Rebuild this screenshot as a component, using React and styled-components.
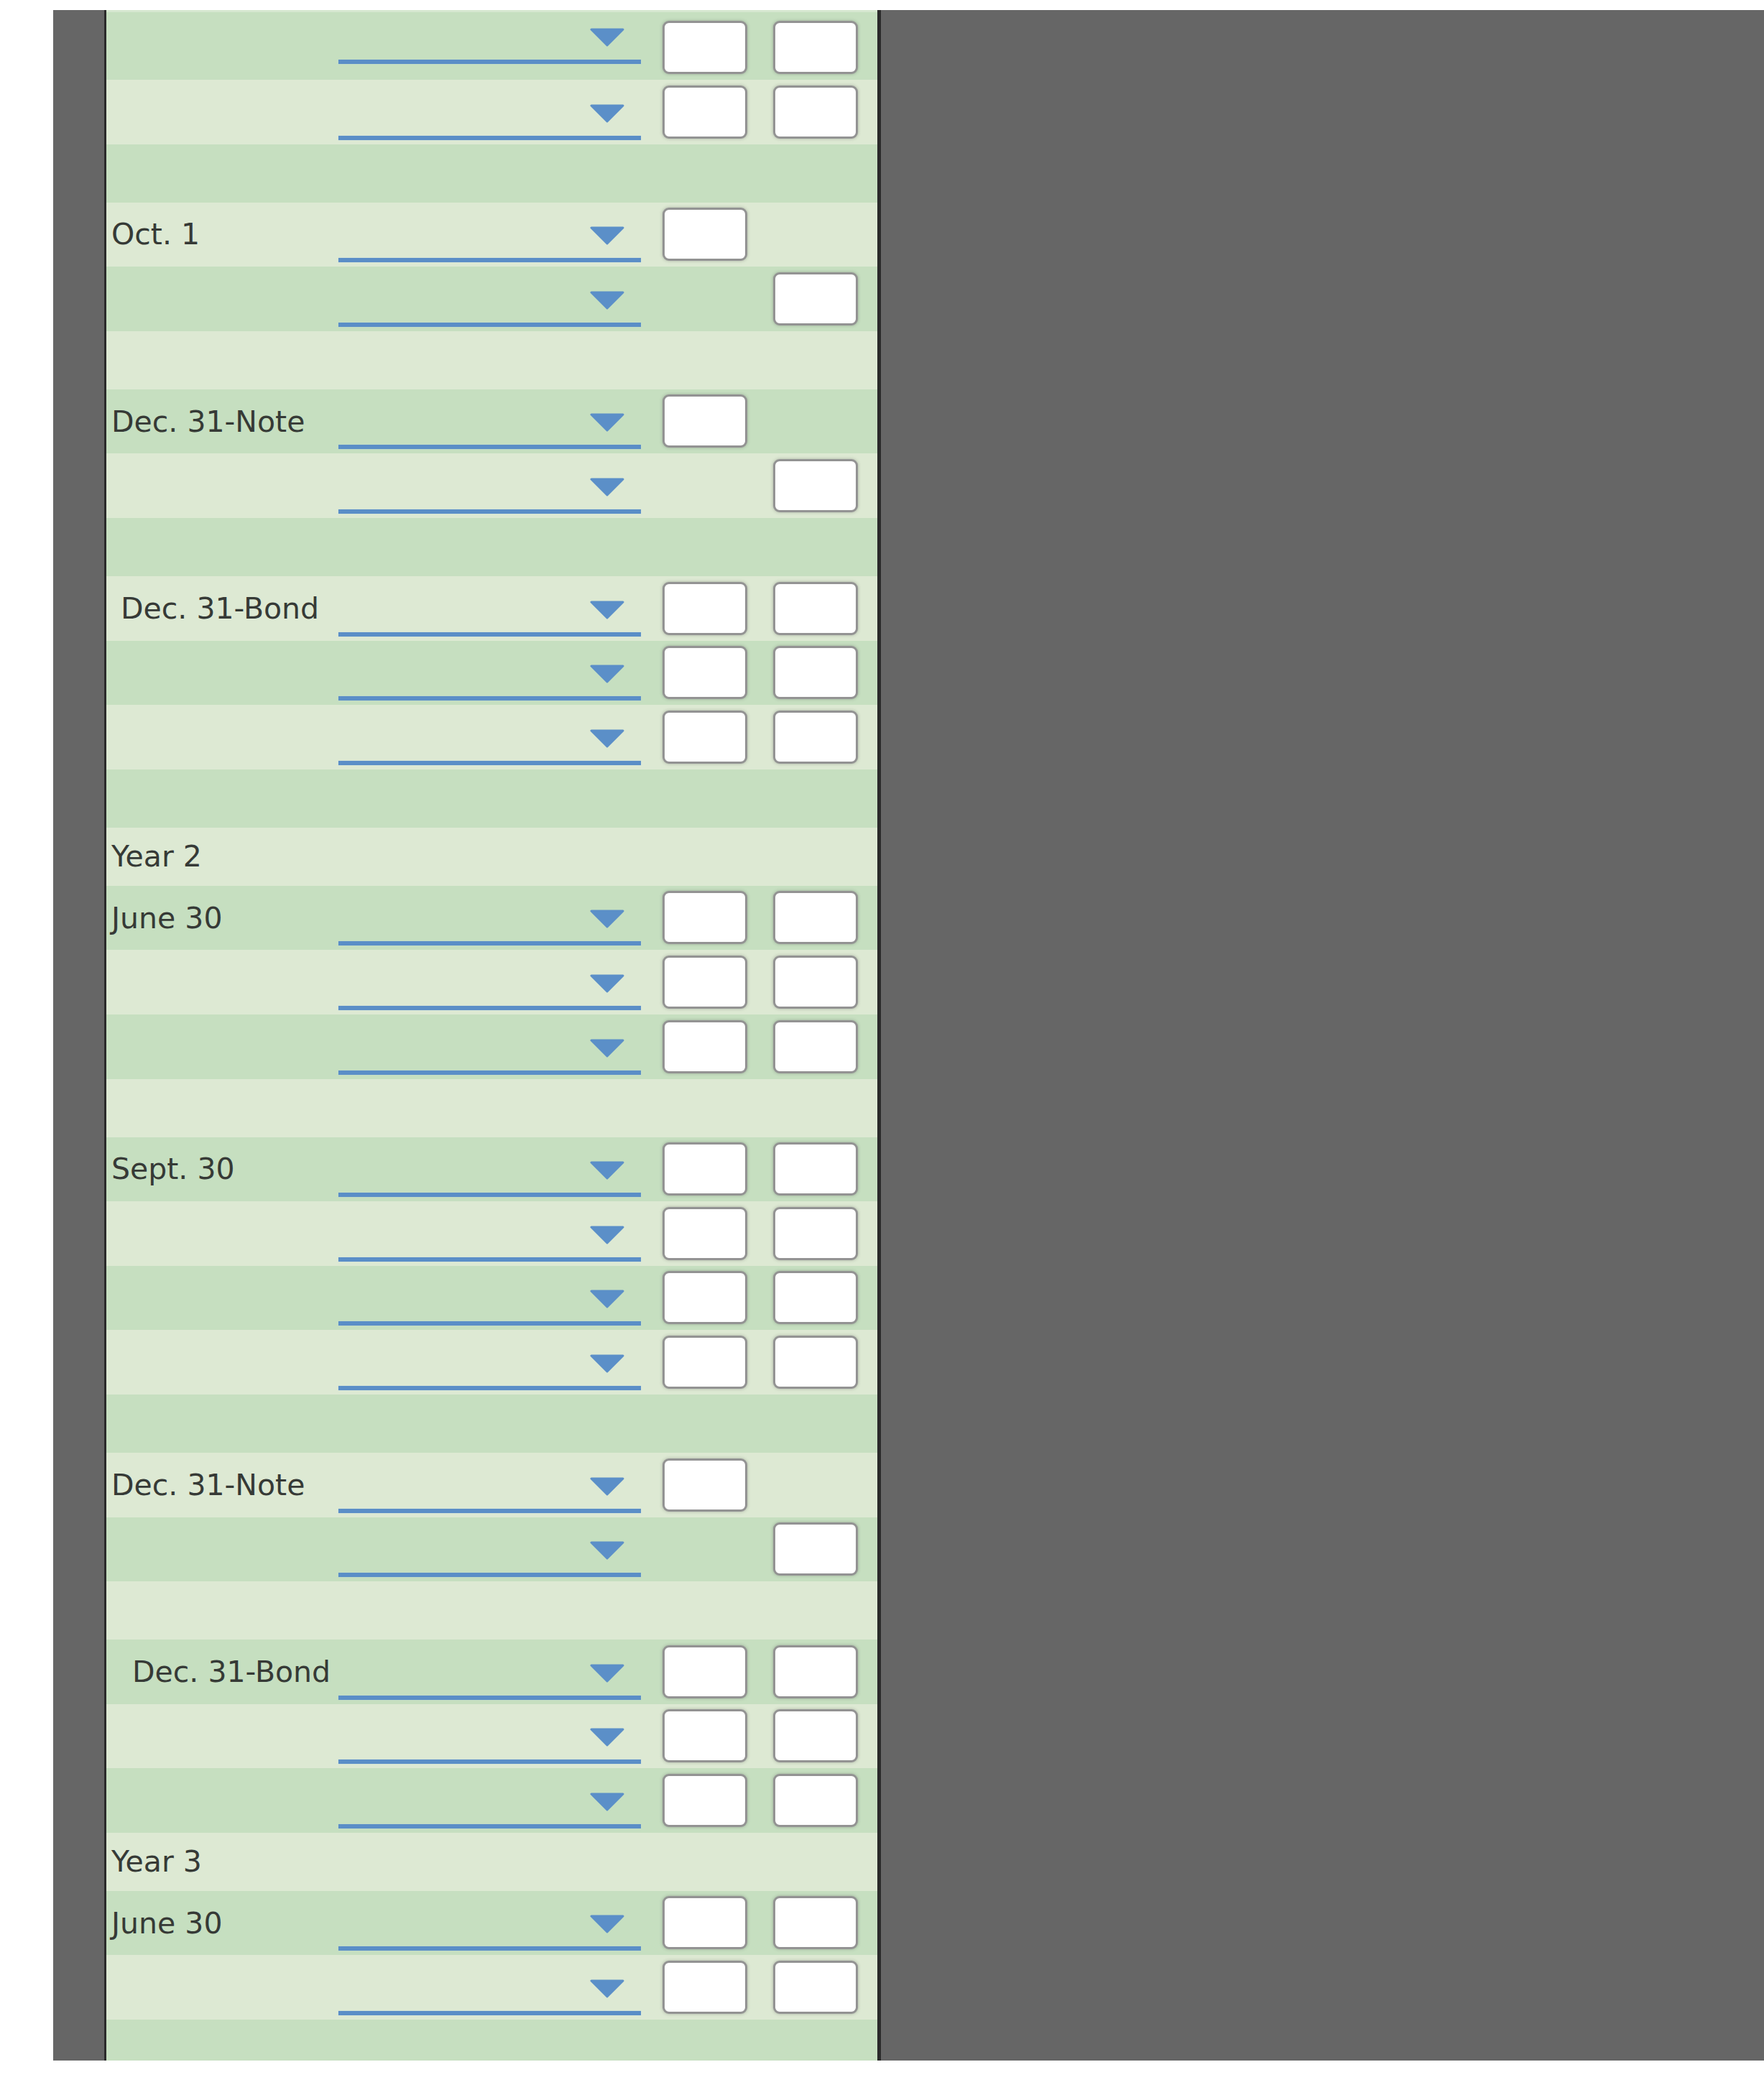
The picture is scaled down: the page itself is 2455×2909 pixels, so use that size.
import styled, { createGlobalStyle } from 'styled-components';

const GlobalStyle = createGlobalStyle`
  html, body {
    margin: 0;
    padding: 0;
    background: #ffffff;
  }
  body {
    font-family: "DejaVu Sans", Verdana, "Liberation Sans", sans-serif;
  }
`;

// journal lines, top to bottom
const rows = [
  { kind: 'entry', debit: true, credit: true, first: true },
  { kind: 'entry', debit: true, credit: true },
  { kind: 'gap' },
  { kind: 'entry', label: 'Oct. 1', debit: true },
  { kind: 'entry', credit: true },
  { kind: 'gap' },
  { kind: 'entry', label: 'Dec. 31-Note', debit: true },
  { kind: 'entry', credit: true },
  { kind: 'gap' },
  { kind: 'entry', label: 'Dec. 31-Bond', indent: 13, debit: true, credit: true },
  { kind: 'entry', debit: true, credit: true },
  { kind: 'entry', debit: true, credit: true },
  { kind: 'gap' },
  { kind: 'heading', label: 'Year 2' },
  { kind: 'entry', label: 'June 30', debit: true, credit: true },
  { kind: 'entry', debit: true, credit: true },
  { kind: 'entry', debit: true, credit: true },
  { kind: 'gap' },
  { kind: 'entry', label: 'Sept. 30', debit: true, credit: true },
  { kind: 'entry', debit: true, credit: true },
  { kind: 'entry', debit: true, credit: true },
  { kind: 'entry', debit: true, credit: true },
  { kind: 'gap' },
  { kind: 'entry', label: 'Dec. 31-Note', debit: true },
  { kind: 'entry', credit: true },
  { kind: 'gap' },
  { kind: 'entry', label: 'Dec. 31-Bond', indent: 29, debit: true, credit: true },
  { kind: 'entry', debit: true, credit: true },
  { kind: 'entry', debit: true, credit: true },
  { kind: 'heading', label: 'Year 3' },
  { kind: 'entry', label: 'June 30', debit: true, credit: true },
  { kind: 'entry', debit: true, credit: true },
  { kind: 'end' },
];

const Caret = () => (
  <svg width="50" height="26" viewBox="0 0 50 26">
    <polygon
      points="3,2 47,2 25,24"
      fill="#5b8fc8"
      stroke="#5b8fc8"
      strokeWidth="3"
      strokeLinejoin="round"
    />
  </svg>
);

export default function App() {
  return (
    <>
      <GlobalStyle />
      <Page>
        <Gutter />
        <Sheet>
          {rows.map((row, i) => (
            <Row key={i} $kind={row.kind} $first={row.first}>
              {row.label && <Label $indent={row.indent || 0}>{row.label}</Label>}
              {row.kind === 'entry' && (
                <Select $first={row.first}>
                  <Caret />
                  <Underline />
                </Select>
              )}
              {row.debit && <Amount $col={3} type="text" />}
              {row.credit && <Amount $col={4} type="text" />}
            </Row>
          ))}
        </Sheet>
        <Backdrop />
      </Page>
    </>
  );
}

// -------------------------------------------------- styling ----------------------------------------------
const heights = {
  entry: '89.6px',
  gap: '81px',
  heading: '81px',
  end: '56.8px',
};

const Page = styled.div`
  display: flex;
  margin: 14px 0 0 74px;
  background-color: #666666;
`;

const Gutter = styled.div`
  width: 71px;
  flex-shrink: 0;
`;

const Backdrop = styled.div`
  flex: 1;
`;

const Sheet = styled.div`
  width: 1073px;
  flex-shrink: 0;
  border-left: 3px solid #2a2a2a;
  border-right: 5px solid #2a2a2a;
`;

const Row = styled.div`
  display: grid;
  grid-template-columns: 323px 421px 148px 154px;
  grid-template-rows: 100%;
  height: ${({ $kind, $first }) => ($first ? '97px' : heights[$kind])};
  background-color: #c6dfc0;
  box-shadow: ${({ $first }) => ($first ? 'inset 0 3px 0 #d6e7d0' : 'none')};

  &:nth-child(even) {
    background-color: #dde9d3;
  }
`;

const Label = styled.div`
  grid-column: 1;
  grid-row: 1;
  align-self: center;
  padding-left: ${({ $indent }) => 7 + $indent}px;
  font-size: 41px;
  color: #363a36;
  white-space: nowrap;
`;

const Select = styled.div`
  grid-column: 2;
  grid-row: 1;
  display: flex;
  flex-direction: column;
  justify-content: flex-end;
  align-items: flex-end;
  padding-bottom: ${({ $first }) => ($first ? '22px' : '6px')};

  svg {
    display: block;
    margin-right: 22px;
    margin-bottom: 18px;
  }
`;

const Underline = styled.div`
  width: 100%;
  height: 6px;
  background-color: #5a8ec7;
  box-shadow: 0 0 1px #a9c8e6;
`;

const Amount = styled.input`
  grid-column: ${({ $col }) => $col};
  grid-row: 1;
  justify-self: end;
  align-self: end;
  margin: 0 0 8px 0;
  width: 118px;
  height: 74px;
  box-sizing: border-box;
  padding: 0 8px;
  border: 3px solid #939393;
  border-radius: 9px;
  background-color: #ffffff;
  box-shadow: 0 0 4px rgba(70, 70, 70, 0.35);
  font-family: "DejaVu Sans", sans-serif;
  font-size: 30px;
  outline: none;
`;
